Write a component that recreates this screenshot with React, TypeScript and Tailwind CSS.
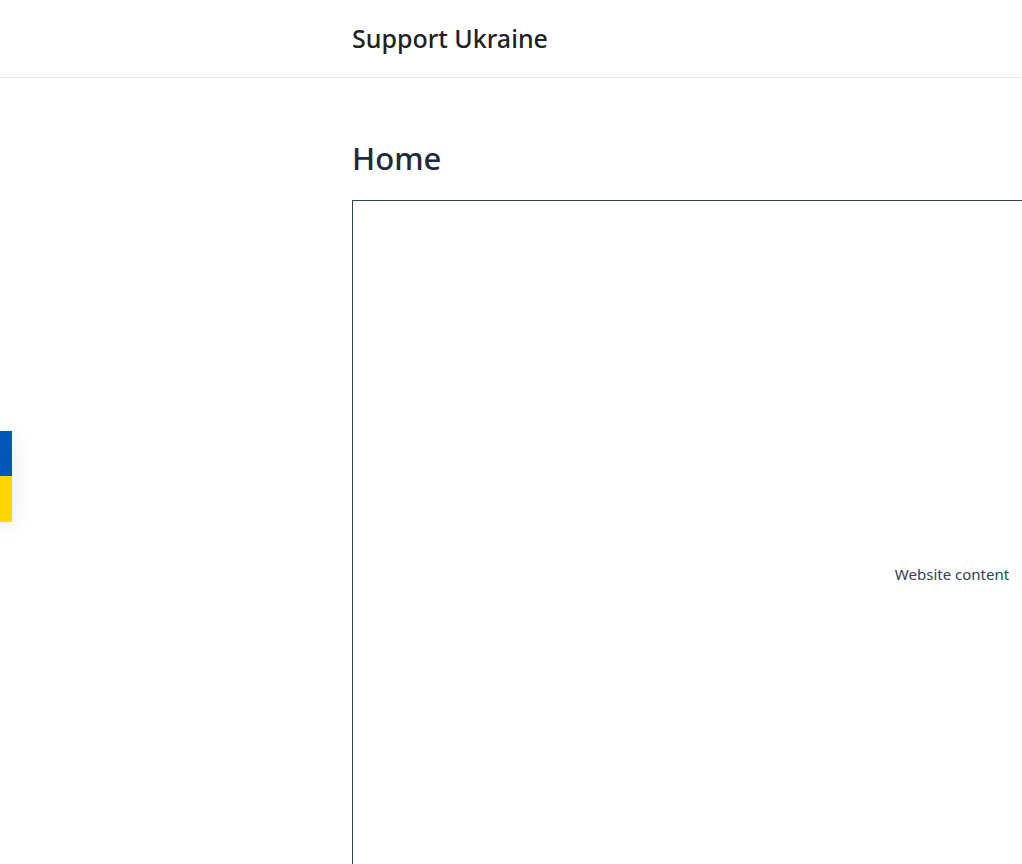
export default function App() {
  return (
    <div className="h-screen overflow-hidden bg-white font-['Noto_Sans','Open_Sans',sans-serif] text-slate-800">
      <header className="border-b border-gray-200 pt-5 pb-[21px] pl-[352px]">
        <a href="#" className="block text-[25px] leading-9 font-medium text-[#212121]">
          Support Ukraine
        </a>
      </header>

      <main className="pt-14 pl-[352px]">
        <h1 className="text-[31px] leading-12 font-medium">Home</h1>
        <section className="mt-[18px] flex h-[748px] w-[1200px] items-center justify-center border border-slate-700 text-slate-700">
          <p className="text-[15px] leading-6">Website content</p>
        </section>
      </main>

      <button
        type="button"
        aria-label="Support Ukraine"
        className="fixed top-[431px] left-0 flex h-[91px] w-3 flex-col shadow-[0_4px_20px_rgba(0,0,0,0.12)]"
      >
        <span className="h-[45px] w-full bg-[#0057b7]" />
        <span className="w-full grow bg-[#ffd700]" />
      </button>
    </div>
  );
}
